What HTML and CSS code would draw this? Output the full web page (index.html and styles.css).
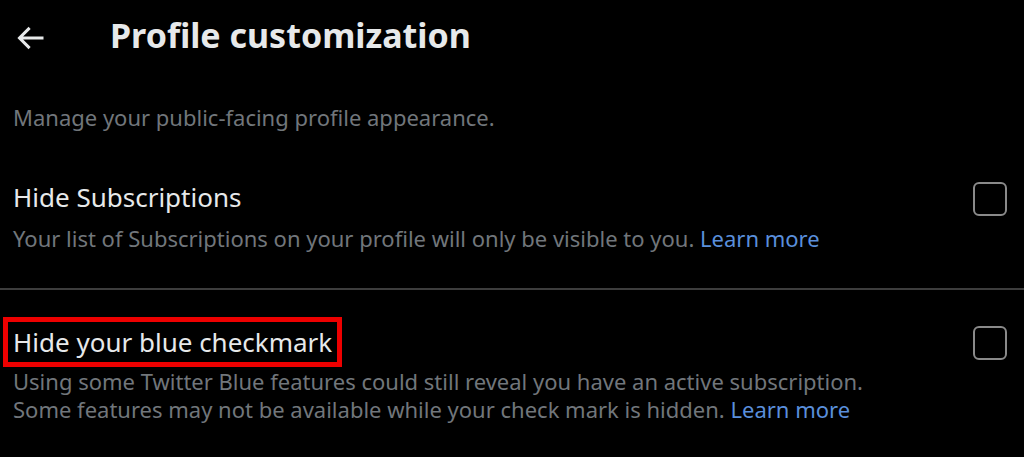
FILE: index.html
```html
<!DOCTYPE html>
<html lang="en">
<head>
<meta charset="utf-8">
<title>Profile customization</title>
<link rel="stylesheet" href="styles.css">
</head>
<body>
<div class="page">
  <header class="header">
    <span class="back" aria-label="Back">
      <svg width="36" height="36" viewBox="0 0 24 24"><path d="M7.414 13l5.043 5.04-1.414 1.42L3.586 12l7.457-7.46 1.414 1.42L7.414 11H21v2H7.414z" fill="#e7e9ea"/></svg>
    </span>
    <h1 class="title">Profile customization</h1>
  </header>
  <p class="intro">Manage your public-facing profile appearance.</p>
  <section class="setting first">
    <div class="text">
      <div class="label">Hide Subscriptions</div>
      <div class="desc">Your list of Subscriptions on your profile will only be visible to you. <a class="link">Learn more</a></div>
    </div>
    <span class="checkbox"></span>
  </section>
  <div class="divider"></div>
  <section class="setting second">
    <div class="text">
      <div class="label"><span class="highlight">Hide your blue checkmark</span></div>
      <div class="desc">Using some Twitter Blue features could still reveal you have an active subscription.<br>Some features may not be available while your check mark is hidden. <a class="link">Learn more</a></div>
    </div>
    <span class="checkbox"></span>
  </section>
</div>
</body>
</html>
```
FILE: styles.css
```css
* { box-sizing: border-box; }
html, body { margin: 0; padding: 0; background: #000; }
body {
  font-family: "Noto Sans", "Open Sans", sans-serif;
  color: #e7e9ea;
  width: 1024px;
  height: 457px;
  overflow: hidden;
}
.header {
  display: flex;
  align-items: flex-start;
  padding: 15px 0 0 12px;
  height: 55px;
}
.back { display: flex; width: 36px; height: 36px; margin-top: 5px; }
.title {
  margin: 0 0 0 62px;
  font-size: 34px;
  line-height: 40px;
  font-weight: 700;
  color: #e7e9ea;
}
.intro {
  margin: 47px 0 0 13px;
  font-size: 22px;
  line-height: 30px;
  color: #71767b;
}
.setting {
  display: flex;
  justify-content: space-between;
  align-items: flex-start;
  padding: 0 17px 0 13px;
}
.setting.first { margin-top: 48px; padding-bottom: 36px; }
.setting.first .checkbox { margin-top: 2px; }
.setting.second { padding-top: 37px; }
.setting.second .checkbox { margin-top: -1px; }
.label {
  font-size: 26px;
  line-height: 34px;
  color: #e7e9ea;
}
.second .label { line-height: 30px; }
.desc {
  margin-top: 10px;
  font-size: 22px;
  line-height: 28px;
  color: #71767b;
}
.link { color: #5a8fdb; text-decoration: none; }
.checkbox {
  flex: none;
  width: 34px;
  height: 34px;
  border: 2.5px solid #8a8a8a;
  border-radius: 6px;
}
.divider { height: 2px; background: #3d3d3d; }
.highlight {
  display: inline-block;
  outline: 5px solid #ee0000;
  outline-offset: 5px;
}
```
